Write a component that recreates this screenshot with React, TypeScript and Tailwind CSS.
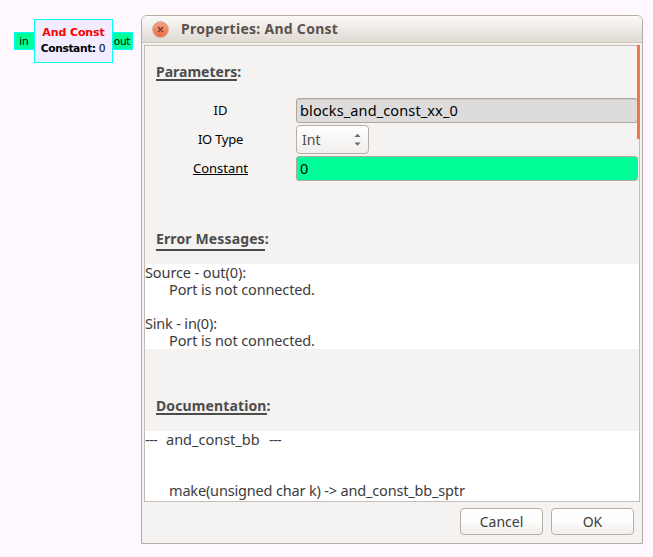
import React from "react";

const button =
  "flex h-[27px] w-[83px] items-center justify-center rounded-[4px] border border-[#b9aea3] bg-linear-to-b from-white via-[#fdfdfd] to-[#f1eeec] text-[14px] text-[#3c3c3c]";

function Heading({ title, className }: { title: string; className: string }) {
  return (
    <h2 className="flex text-[14px] leading-[20px] font-bold whitespace-nowrap text-[#4c4c4c]">
      <span className={"border-b-2 border-[#4c4c4c] " + className}>{title}</span>
      <span>:</span>
    </h2>
  );
}

function Block() {
  return (
    <div className="mt-[19px] ml-[14px] flex h-[44px] w-[119px] items-center font-['DejaVu_Sans',sans-serif] text-black">
      <div className="mb-px flex h-[18px] w-[20px] items-center justify-center border border-r-0 border-[#00ffff] bg-[#00ff99] pr-px text-[10.5px] leading-[16px]">
        in
      </div>
      <div className="h-[44px] w-[79px] border border-[#00ffff] bg-[#f1ecff] pt-[5px] text-center whitespace-nowrap">
        <div className="text-[11px] leading-[16px] font-bold tracking-[-0.1px] text-[#ff0000]">And Const</div>
        <div className="pr-px text-[10.7px] leading-[16px] tracking-[-0.4px]">
          <b>Constant:</b> 0
        </div>
      </div>
      <div className="mb-px flex h-[18px] w-[20px] items-center justify-center border border-l-0 border-[#00ffff] bg-[#00ff99] pr-px text-[10.5px] leading-[16px] tracking-[-0.3px]">
        out
      </div>
    </div>
  );
}

export default function App() {
  return (
    <div className="flex h-[557px] w-[653px] items-start overflow-hidden bg-[#fff9ff] font-['Noto_Sans',sans-serif]">
      <Block />
      <section className="mt-[15px] ml-[8px] flex h-[529px] w-[502px] shrink-0 flex-col overflow-hidden rounded-t-[6px] border border-[#b6aba0] bg-[#f4f3f2]">
        <header className="flex h-[27px] shrink-0 items-center border-b border-[#d0c6b9] bg-linear-to-b from-[#fbfaf9] to-[#dfd9d2] pl-[10px]">
          <svg width="17" height="17" viewBox="0 0 17 17">
            <defs>
              <linearGradient id="close" x1="0" y1="0" x2="0" y2="1">
                <stop offset="0" stopColor="#f9a184" />
                <stop offset="1" stopColor="#ef6b3e" />
              </linearGradient>
            </defs>
            <circle cx="8.5" cy="8.5" r="7.8" fill="url(#close)" stroke="#c9a08e" strokeWidth="1" />
            <path d="M6 6l5 5M11 6l-5 5" stroke="#60392b" strokeWidth="1.1" />
          </svg>
          <h1 className="ml-[12px] text-[14px] leading-[20px] font-bold tracking-[0.28px] whitespace-nowrap text-[#5b524c]">
            Properties: And Const
          </h1>
        </header>

        <main className="relative mt-[2px] ml-[2px] h-[457px] w-[496px] shrink-0 border border-[#c5bdb3]">
          <div className="flex h-full flex-col whitespace-nowrap">
            <div className="h-[52px] shrink-0 pt-[16px] pl-[11px]">
              <Heading title="Parameters" className="h-[19px]" />
            </div>
            <div className="grid shrink-0 grid-cols-[151px_1fr] pr-px text-[13px] text-black">
              <div className="flex h-[25px] items-center justify-center">
                <span>ID</span>
              </div>
              <div className="flex h-[25px] items-center rounded-[3px] border border-[#b3a79b] bg-[#dcdcdc] pl-[3px] text-[14.5px] shadow-[inset_0_1px_0_#cccac8]">
                <span className="tracking-[0.12px]">blocks_and_const_xx_0</span>
              </div>
              <div className="mt-[2px] flex h-[29px] items-center justify-center">
                <span className="tracking-[-0.25px]">IO Type</span>
              </div>
              <div className="mt-[2px] flex h-[29px] w-[73px] items-center justify-between rounded-[4px] border border-[#b9aea3] bg-linear-to-b from-white to-[#f1eeec] pr-[7px] pl-[5px] text-[14px] text-[#4c4c4c]">
                <span>Int</span>
                <svg width="7" height="13" viewBox="0 0 7 13" fill="#696969">
                  <path d="M0.5 4L3.5 0.8L6.5 4ZM0.5 9.5L3.5 12.7L6.5 9.5Z" />
                </svg>
              </div>
              <div className="mt-[2px] flex h-[25px] items-center justify-center">
                <span className="underline decoration-1 underline-offset-[1px] [text-decoration-skip-ink:none]">
                  Constant
                </span>
              </div>
              <div className="mt-[2px] flex h-[25px] items-center rounded-[3px] border border-[#b3a79b] bg-[#00ff99] pl-[3px] text-[14.5px]">
                0
              </div>
            </div>
            <div className="h-[83px] shrink-0 pt-[48px] pl-[11px]">
              <Heading title="Error Messages" className="h-[22px] tracking-[0.13px]" />
            </div>
            <div className="h-[85px] shrink-0 bg-white text-[14.5px] leading-[17px] text-[#3c3c3c]">
              <div className="tracking-[-0.1px]">Source - out(0):</div>
              <div className="pl-[24px] tracking-[-0.13px]">Port is not connected.</div>
              <div className="mt-[17px] tracking-[-0.18px]">Sink - in(0):</div>
              <div className="pl-[24px] tracking-[-0.13px]">Port is not connected.</div>
            </div>
            <div className="h-[82px] shrink-0 pt-[47px] pl-[11px]">
              <Heading title="Documentation" className="h-[19px] tracking-[0.12px]" />
            </div>
            <div className="min-h-0 flex-1 bg-white text-[14.5px] leading-[17px] text-[#3c3c3c]">
              <div className="flex">
                <span className="w-[21px] tracking-[-0.7px]">---</span>
                <span className="w-[103px]">and_const_bb</span>
                <span className="tracking-[-0.7px]">---</span>
              </div>
              <div className="mt-[34px] pl-[24px] tracking-[-0.17px]">
                make(unsigned char k) -&gt; and_const_bb_sptr
              </div>
            </div>
          </div>
          <div className="absolute -top-px right-[-1px] h-[94px] w-[3px] bg-[#f07746]" />
        </main>
        <footer className="mt-[6px] flex justify-end gap-[8px] pr-[8px]">
          <button className={button}>Cancel</button>
          <button className={button}>OK</button>
        </footer>
      </section>
    </div>
  );
}
